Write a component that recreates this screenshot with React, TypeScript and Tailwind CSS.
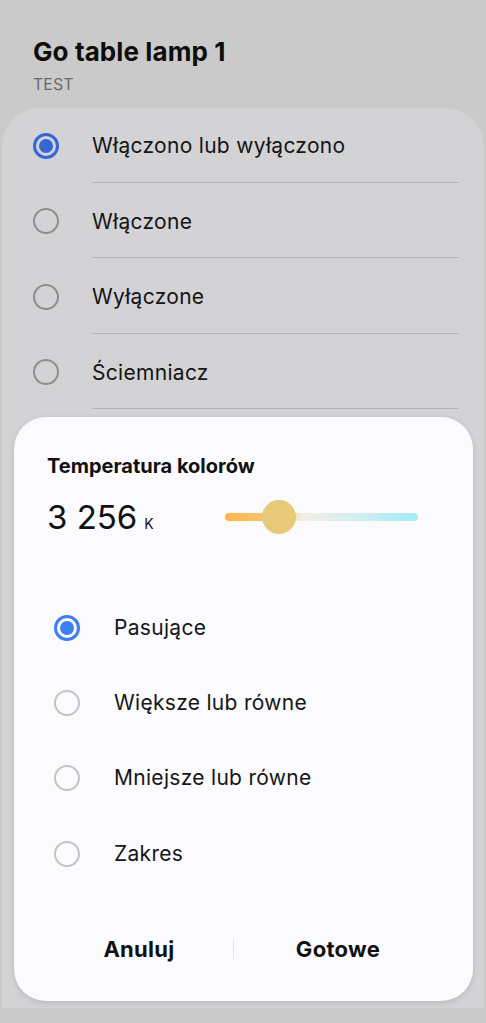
import React from "react";

function Radio({ checked, dim }: { checked?: boolean; dim?: boolean }) {
  if (checked) {
    return (
      <div
        className={`w-[26px] h-[26px] rounded-full border-[3px] flex items-center justify-center ${
          dim ? "border-[#3468d6]" : "border-[#3b7ff3]"
        }`}
      >
        <div className={`w-[14px] h-[14px] rounded-full ${dim ? "bg-[#3468d6]" : "bg-[#3b7ff3]"}`} />
      </div>
    );
  }
  return (
    <div
      className={`w-[26px] h-[26px] rounded-full border-2 ${
        dim ? "border-[#8e8e90]" : "border-[#c4c4c6]"
      }`}
    />
  );
}

export default function App() {
  const bgRows = ["Włączono lub wyłączono", "Włączone", "Wyłączone", "Ściemniacz"];
  const dlgRows = ["Pasujące", "Większe lub równe", "Mniejsze lub równe", "Zakres"];
  return (
    <div
      className="relative w-[486px] h-[1023px] overflow-hidden bg-[#cacaca] text-[#111]"
      style={{ fontFamily: "Inter, Roboto, 'Noto Sans', sans-serif" }}
    >
      <div className="pt-[36px] pl-[33px] h-[108px]">
        <div className="text-[26px] font-bold leading-[32px] tracking-[0.1px] text-[#0d0d0d]">Go table lamp 1</div>
        <div className="text-[16px] leading-[20px] text-[#6a6a6a] mt-[6px]">TEST</div>
      </div>
      <div className="mx-[2px] rounded-t-[38px] bg-[#d3d3d5] h-[900px]">
        {bgRows.map((t, i) => (
          <div key={t} className="flex items-center h-[75.5px] relative">
            <div className="w-[90px] pl-[31px] flex items-center">
              <Radio checked={i === 0} dim />
            </div>
            <div className="text-[21px] tracking-[0.3px] text-[#141414]">{t}</div>
            <div className="absolute left-[90px] right-[25px] bottom-[1px] h-px bg-[#b4b4b6]" />
          </div>
        ))}
      </div>

      <div className="absolute left-[14px] top-[417px] w-[459px] h-[584px] rounded-[32px] bg-[#fbfbfd] shadow-[0_2px_6px_rgba(0,0,0,0.12)] flex flex-col">
        <div className="pt-[35px] px-[33px]">
          <div className="text-[20px] font-bold leading-[28px] text-[#111]">Temperatura kolorów</div>
          <div className="flex items-center mt-[12px] h-[50px]">
            <div className="w-[178px] flex items-baseline">
              <span className="text-[33px] leading-[40px] text-[#111]">3 256</span>
              <span className="text-[14px] ml-[7px] text-[#111]">K</span>
            </div>
            <div className="relative w-[193px] h-[8px] rounded-full bg-[linear-gradient(to_right,#fdb44c_0%,#f6c872_25%,#f1ede4_40%,#d8eff2_65%,#a2ecf6_100%)]">
              <div className="absolute left-[37px] top-[-13px] w-[34px] h-[34px] rounded-full bg-[#e6ca78]" />
            </div>
          </div>
        </div>
        <div className="mt-[48px]">
          {dlgRows.map((t, i) => (
            <div key={t} className="flex items-center h-[75.3px]">
              <div className="w-[100px] pl-[40px] flex items-center">
                <Radio checked={i === 0} />
              </div>
              <div className="text-[21px] tracking-[0.3px] text-[#161616]">{t}</div>
            </div>
          ))}
        </div>
        <div className="flex items-center mt-[33px] h-[50px] pl-[31px]">
          <div className="w-[188px] text-center text-[22px] font-bold tracking-[0.3px] text-[#111]">Anuluj</div>
          <div className="w-px h-[20px] bg-[#e4e4e6]" />
          <div className="w-[208px] text-center text-[22px] font-bold tracking-[0.3px] text-[#111]">Gotowe</div>
        </div>
      </div>
    </div>
  );
}
